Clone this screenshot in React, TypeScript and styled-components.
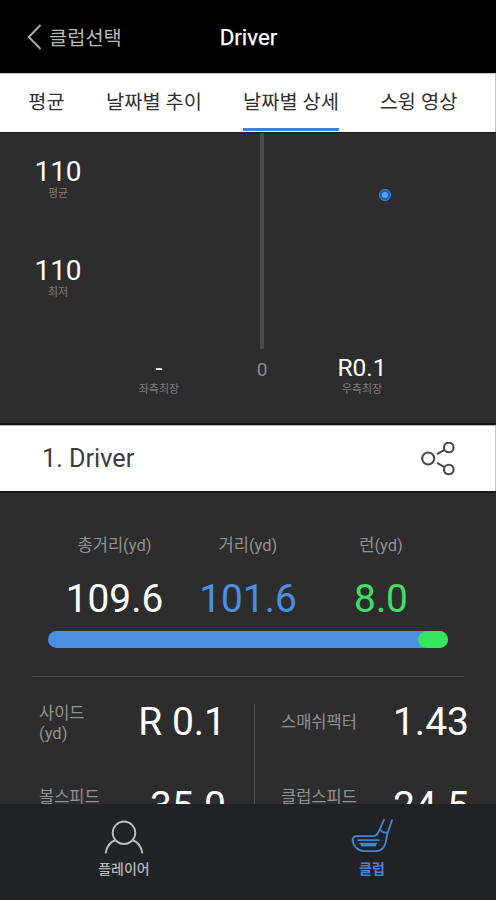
import React from 'react';
import styled, { createGlobalStyle } from 'styled-components';

const GlobalStyle = createGlobalStyle`
  * { box-sizing: border-box; }
  body {
    margin: 0;
    background: #2d2d2d;
    font-family: Roboto, "Noto Sans CJK KR", sans-serif;
  }
`;

const Screen = styled.div`
  width: 496px;
  height: 900px;
  display: flex;
  flex-direction: column;
  overflow: hidden;
  background: #2d2d2d;
  color: #fff;
  white-space: nowrap;
`;

const Header = styled.header`
  flex: none;
  height: 73px;
  display: grid;
  grid-template-columns: 1fr auto 1fr;
  align-items: center;
  padding: 1px 0 0 27px;
  background: #000;
`;

const BackButton = styled.button`
  display: flex;
  align-items: center;
  gap: 7px;
  padding: 0;
  border: 0;
  background: none;
  color: #b9b9b9;
  font: 400 19.8px/28px Roboto, "Noto Sans CJK KR", sans-serif;
`;

const BackText = styled.span`
  padding-top: 3px;
`;

const Title = styled.h1`
  margin: 0 26px 0 0;
  font-size: 22.3px;
  line-height: 28px;
  font-weight: 400;
  color: #fff;
  -webkit-text-stroke: 0.25px #fff;
`;

const Tabs = styled.nav`
  flex: none;
  height: 59px;
  display: flex;
  gap: 41px;
  padding-left: 28px;
  background: #fff;
  border-top: 1px solid #c4c4c4;
  border-right: 1px solid #c4c4c4;
`;

const Tab = styled.button<{ $active?: boolean; $width: number }>`
  width: ${(p) => p.$width}px;
  display: flex;
  justify-content: center;
  padding: 15px 0 0;
  border: 0;
  border-bottom: 3px solid ${(p) => (p.$active ? '#3a87d9' : 'transparent')};
  margin-bottom: 1px;
  background: none;
  color: #303030;
  font: 400 19.8px/28px Roboto, "Noto Sans CJK KR", sans-serif;
`;

const Chart = styled.section`
  flex: none;
  height: 293px;
  display: grid;
  grid-template-columns: 116px 86px 120px 174px;
  grid-template-rows: 217px 76px;
  border-top: 1px solid #191919;
  border-bottom: 2px solid #141414;
`;

const Heights = styled.div`
  display: flex;
  flex-direction: column;
  gap: 54px;
  padding-top: 24px;
`;

const Metric = styled.div<{ $size: number }>`
  display: flex;
  flex-direction: column;
  align-items: center;
  font-size: ${(p) => p.$size}px;
  line-height: 30px;
  color: #fafafa;
`;

const Caption = styled.span`
  margin-top: -1px;
  font-size: 11px;
  line-height: 16px;
  color: #7d7d7d;
`;

const CenterLine = styled.div`
  grid-column: 3;
  width: 4px;
  height: 216px;
  justify-self: center;
  background: #4a4a4a;
`;

const Landing = styled.div`
  padding: 55px 0 0 56px;

  svg { display: block; }
`;

const ChartFooter = styled.div`
  grid-column: 1 / -1;
  display: grid;
  grid-template-columns: 104px 110px 96px 104px;
  padding-top: 3px;
`;

const Zero = styled.span`
  grid-column: 3;
  text-align: center;
  font-size: 19px;
  line-height: 34px;
  color: #8a8a8a;
`;

const LeftMetric = styled(Metric)`
  grid-column: 2;
`;

const ShotBar = styled.section`
  flex: none;
  height: 66px;
  display: flex;
  align-items: center;
  justify-content: space-between;
  padding: 0 40px 0 42px;
  background: #fff;
  border-top: 1px solid #b5b5b5;
  border-right: 1px solid #c4c4c4;
`;

const ShotName = styled.h2`
  margin: 0;
  font-size: 25.2px;
  line-height: 32px;
  font-weight: 400;
  color: #3b3b3b;
`;

const Details = styled.main`
  flex: 1;
  min-height: 0;
  overflow: hidden;
  border-top: 2px solid #1a1a1a;
`;

const Distances = styled.div`
  display: grid;
  grid-template-columns: 133px 134px 132px;
  padding: 43px 0 0 48px;
`;

const Distance = styled.div<{ $color: string }>`
  display: flex;
  flex-direction: column;
  align-items: center;
  gap: 20px;
  font-size: 38.8px;
  line-height: 46px;
  color: ${(p) => p.$color};
`;

const Label = styled.span`
  font-size: 16.5px;
  line-height: 20px;
  color: #929292;
`;

const Track = styled.div`
  display: flex;
  justify-content: flex-end;
  width: 400px;
  height: 17px;
  margin: 9px 0 0 48px;
  border-radius: 9px;
  background: #4a90e2;
`;

const RunPart = styled.div`
  width: 30px;
  border-radius: 9px;
  background: #33e65c;
`;

const Divider = styled.hr`
  width: 432px;
  height: 1px;
  margin: 28px 0 0 32px;
  border: 0;
  background: #484848;
`;

const Stats = styled.div`
  display: grid;
  grid-template-columns: 254px 242px;
  margin-top: 27px;
  height: 200px;
`;

const StatColumn = styled.div<{ $divided?: boolean }>`
  padding: ${(p) => (p.$divided ? '0 27px 0 26px' : '0 28px 0 39px')};
  border-left: ${(p) => (p.$divided ? '1px solid #4c4c4c' : '0')};
`;

const Stat = styled.div<{ $labelTop: number; $valueTop: number }>`
  height: 75px;
  display: flex;
  justify-content: space-between;
  align-items: flex-start;

  ${Label} { padding-top: ${(p) => p.$labelTop}px; }
  > :last-child { padding-top: ${(p) => p.$valueTop}px; }
`;

const Value = styled.span`
  font-size: 39px;
  line-height: 36px;
  color: #fff;
`;

const BottomNav = styled.nav`
  flex: none;
  height: 96px;
  display: grid;
  grid-template-columns: 1fr 1fr;
  background: #212226;
`;

const NavItem = styled.button<{ $active?: boolean }>`
  display: flex;
  flex-direction: column;
  align-items: center;
  gap: 4px;
  padding: 15px 0 0;
  border: 0;
  background: none;
  color: ${(p) => (p.$active ? '#4384d3' : '#b8b8ba')};
  font: ${(p) => (p.$active ? 700 : 500)} 14px/20px Roboto, "Noto Sans CJK KR", sans-serif;
`;

const BackIcon = () => (
  <svg width="15" height="26" viewBox="0 0 15 26" fill="none" stroke="#a8a8a8" strokeWidth="2">
    <path d="M13.5 1 1.8 13 13.5 25" />
  </svg>
);

const ShareIcon = () => (
  <svg width="34" height="34" viewBox="0 0 34 34" fill="none" stroke="#4a4a4a" strokeWidth="2.1">
    <circle cx="7.2" cy="16.5" r="6" />
    <circle cx="27.8" cy="5.5" r="4.8" />
    <circle cx="27.8" cy="27.5" r="4.8" />
    <path d="M16 12.1 23.5 7.8M16 20.9 23.5 25.2" />
  </svg>
);

const PlayerIcon = () => (
  <svg width="40" height="36" viewBox="0 0 40 36" fill="none" stroke="#bcbcbe" strokeWidth="1.9">
    <circle cx="20" cy="13.8" r="11.3" />
    <path d="M1.6 34.3C2.6 27.8 6.3 22.8 11.7 21M38.4 34.3C37.4 27.8 33.7 22.8 28.3 21" />
  </svg>
);

const ClubIcon = () => (
  <svg width="42" height="36" viewBox="0 0 42 36" fill="none" stroke="#4384d3" strokeWidth="1.8">
    <path d="M33.4 0 27.4 13.2Q25.8 17.2 22 17.2H6Q1.6 17.2 1.6 21C1.8 26.5 7 32.2 13 32.2H25C30 32.2 33.2 28.5 34.5 24L36.2 15.5 41.2 0.5M28.9 10Q31.5 14.5 36.6 13.5" />
    <path d="M6.5 21.2H28.5M8.5 24.6H26" />
    <path d="M10 26H25" strokeWidth="2.8" />
  </svg>
);

export default function App() {
  return (
    <>
      <GlobalStyle />
      <Screen>
        <Header>
          <BackButton><BackIcon /><BackText>클럽선택</BackText></BackButton>
          <Title>Driver</Title>
        </Header>
        <Tabs>
          <Tab $width={37}>평균</Tab>
          <Tab $width={96}>날짜별 추이</Tab>
          <Tab $width={96} $active>날짜별 상세</Tab>
          <Tab $width={77}>스윙 영상</Tab>
        </Tabs>
        <Chart>
          <Heights>
            <Metric $size={28}>110<Caption>평균</Caption></Metric>
            <Metric $size={28}>110<Caption>최저</Caption></Metric>
          </Heights>
          <CenterLine />
          <Landing>
            <svg width="14" height="14" viewBox="0 0 14 14">
              <circle cx="7" cy="7" r="5.6" fill="#1f62b5" stroke="#3d7cc9" />
              <circle cx="7" cy="7" r="3" fill="#55a5fb" />
            </svg>
          </Landing>
          <ChartFooter>
            <LeftMetric $size={24.5}>-<Caption>좌측최장</Caption></LeftMetric>
            <Zero>0</Zero>
            <Metric $size={24.5}>R0.1<Caption>우측최장</Caption></Metric>
          </ChartFooter>
        </Chart>
        <ShotBar>
          <ShotName>1. Driver</ShotName>
          <ShareIcon />
        </ShotBar>
        <Details>
          <Distances>
            <Distance $color="#fff"><Label>총거리(yd)</Label>109.6</Distance>
            <Distance $color="#4a90e2"><Label>거리(yd)</Label>101.6</Distance>
            <Distance $color="#3ee064"><Label>런(yd)</Label>8.0</Distance>
          </Distances>
          <Track><RunPart /></Track>
          <Divider />
          <Stats>
            <StatColumn>
              <Stat $labelTop={0} $valueTop={0}><Label>사이드<br />(yd)</Label><Value>R 0.1</Value></Stat>
              <Stat $labelTop={9} $valueTop={9}><Label>볼스피드</Label><Value>35.0</Value></Stat>
            </StatColumn>
            <StatColumn $divided>
              <Stat $labelTop={9} $valueTop={0}><Label>스매쉬팩터</Label><Value>1.43</Value></Stat>
              <Stat $labelTop={9} $valueTop={9}><Label>클럽스피드</Label><Value>24.5</Value></Stat>
            </StatColumn>
          </Stats>
        </Details>
        <BottomNav>
          <NavItem><PlayerIcon />플레이어</NavItem>
          <NavItem $active><ClubIcon />클럽</NavItem>
        </BottomNav>
      </Screen>
    </>
  );
}
